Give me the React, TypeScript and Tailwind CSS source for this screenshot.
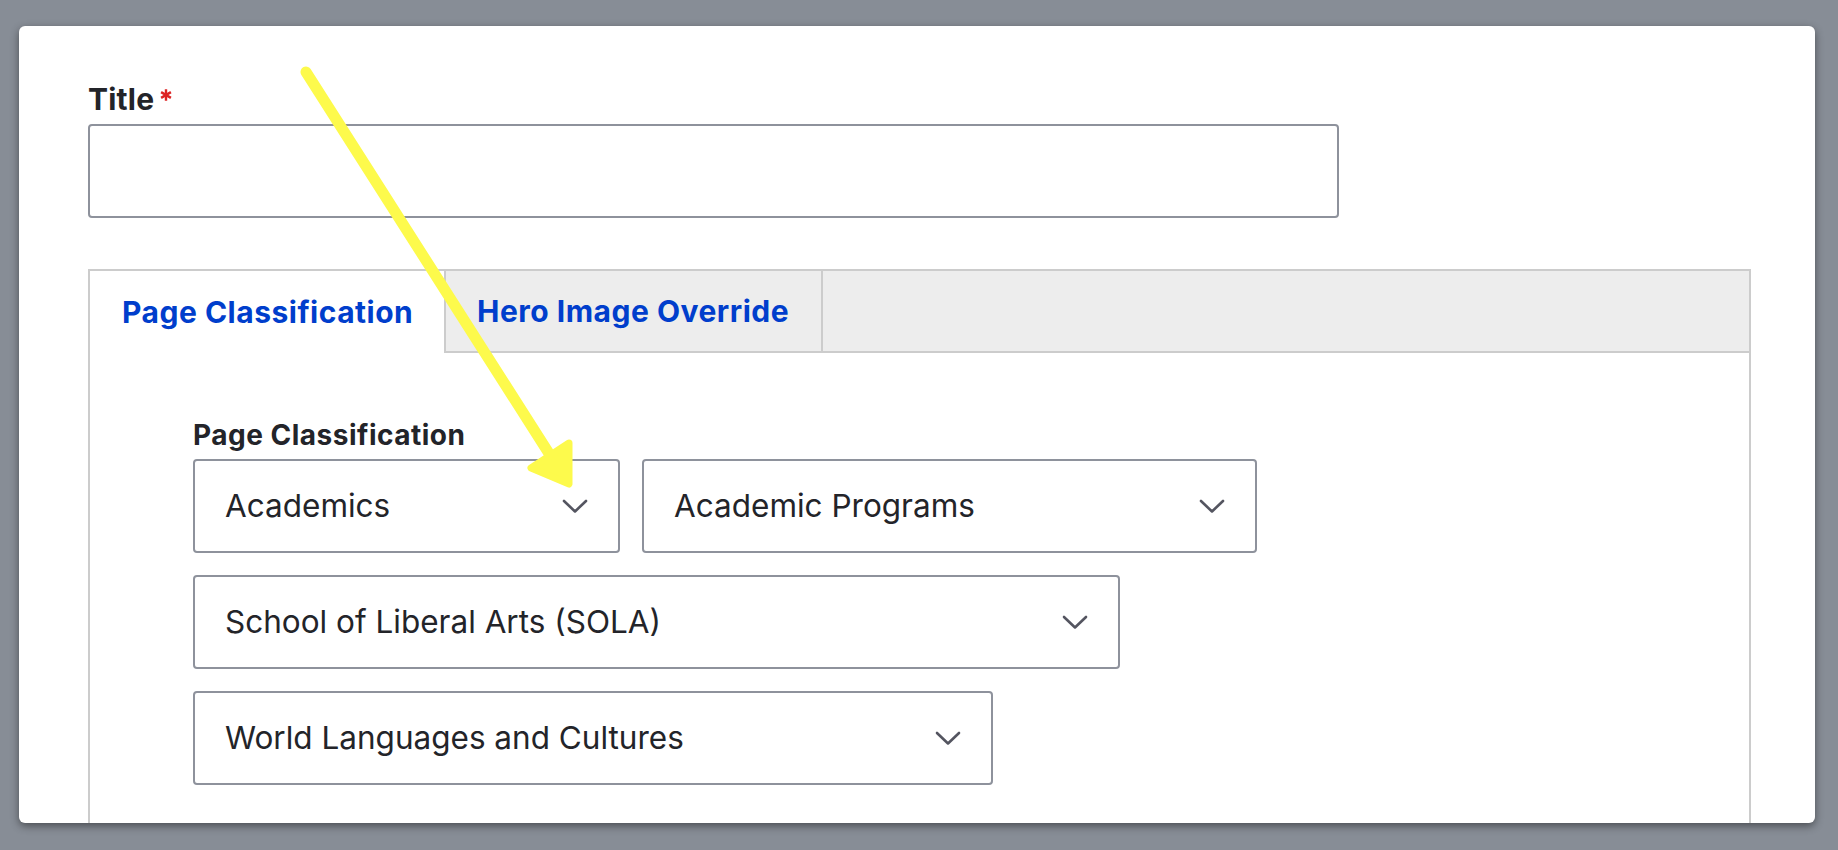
import React from "react";

/** Claro-style select box, closed */
function SelectBox({ value, width }: { value: string; width: string }) {
  return (
    <div
      className={`flex h-[94px] shrink-0 items-center justify-between rounded-[4px] border-2 border-[#8e929c] bg-white pl-[30px] pr-[30px] ${width}`}
    >
      <span className="text-[31.5px] leading-[38px] text-[#232429]">{value}</span>
      <svg width="26" height="15" viewBox="0 0 26 15" fill="none">
        <path d="M2 2 L13 12.5 L24 2" stroke="#545560" strokeWidth="2.6" strokeLinecap="round" strokeLinejoin="round" />
      </svg>
    </div>
  );
}

function Asterisk() {
  return (
    <svg className="ml-[6px] mt-[8px]" width="12" height="12" viewBox="0 0 12 12">
      <g stroke="#dc2323" strokeWidth="2.4">
        <line x1="6" y1="0.3" x2="6" y2="11.7" />
        <line x1="1.1" y1="3.15" x2="10.9" y2="8.85" />
        <line x1="1.1" y1="8.85" x2="10.9" y2="3.15" />
      </g>
    </svg>
  );
}

export default function App() {
  return (
    <div className="relative h-[850px] w-full overflow-hidden bg-[#878d96] pl-[19px] pr-[23px] pt-[26px] font-['Inter',sans-serif]">
      <div className="h-[797px] overflow-hidden rounded-[6px] bg-white pl-[69px] pt-[55px] shadow-[0_3px_8px_rgba(0,0,0,0.45)]">
        {/* Title field */}
        <div className="flex items-start text-[30px] font-bold leading-[36px] tracking-[0.2px] text-[#232429]">
          Title
          <Asterisk />
        </div>
        <div className="mt-[7px] h-[94px] w-[1251px] rounded-[4px] border-2 border-[#8e929c]" />

        {/* Horizontal tabs */}
        <div className="mt-[51px] w-[1663px] border-2 border-b-0 border-[#cccccc]">
          <div className="flex h-[82px]">
            <div className="flex w-[354px] items-center pl-[32px] text-[30px] font-bold leading-[36px] tracking-[0.5px] text-[#003ecc]">
              Page Classification
            </div>
            <div className="flex w-[379px] items-center border-x-2 border-b-2 border-[#cccccc] bg-[#ededed] pl-[31px] text-[30px] font-bold leading-[36px] tracking-[0.5px] text-[#003ecc]">
              Hero Image Override
            </div>
            <div className="flex-1 border-b-2 border-[#cccccc] bg-[#ededed]" />
          </div>

          <div className="pl-[103px] pt-[65px] pb-[60px]">
            <div className="mb-[7px] text-[28px] font-bold leading-[34px] tracking-[0.5px] text-[#232429]">
              Page Classification
            </div>
            <div className="flex flex-col gap-[22px]">
              <div className="flex gap-[22px]">
                <SelectBox value="Academics" width="w-[427px]" />
                <SelectBox value="Academic Programs" width="w-[615px]" />
              </div>
              <SelectBox value="School of Liberal Arts (SOLA)" width="w-[927px]" />
              <SelectBox value="World Languages and Cultures" width="w-[800px]" />
            </div>
          </div>
        </div>
      </div>

      {/* yellow annotation arrow */}
      <svg className="pointer-events-none absolute left-0 top-0" width="1838" height="850" viewBox="0 0 1838 850">
        <line x1="306" y1="72" x2="550" y2="455" stroke="#fdfa4c" strokeWidth="11" strokeLinecap="round" />
        <polygon
          points="569,484 569,443 531,468"
          fill="#fdfa4c"
          stroke="#fdfa4c"
          strokeWidth="7"
          strokeLinejoin="round"
        />
      </svg>
    </div>
  );
}
